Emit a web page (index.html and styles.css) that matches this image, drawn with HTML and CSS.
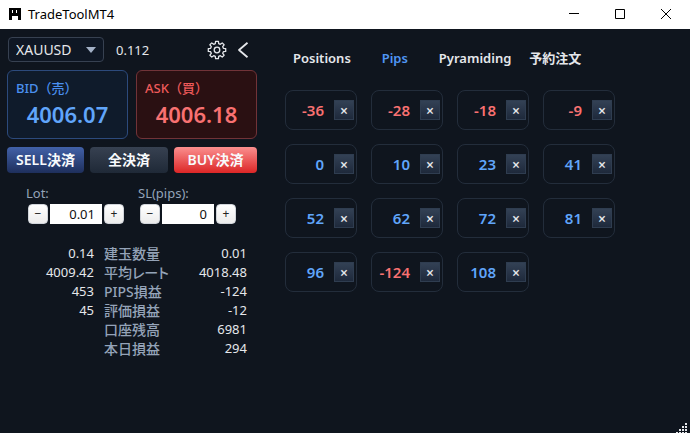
FILE: index.html
```html
<!DOCTYPE html>
<html lang="ja">
<head>
    <meta charset="UTF-8">
    <meta name="viewport" content="width=device-width, initial-scale=1.0">
    <title>TradeToolMT4</title>
    <link rel="stylesheet" href="styles.css">
</head>
<body>

<!-- Title Bar -->
<header class="titlebar">
    <svg class="app-icon" viewBox="0 0 12 12" shape-rendering="crispEdges" aria-hidden="true">
        <path d="M0 0h12v12h-3v-4h-6v4h-3z" fill="#000"/>
        <path d="M3 2h1v3h-1zM7 2h1v3h-1z" fill="#fff"/>
    </svg>
    <span class="app-name">TradeToolMT4</span>
    <button class="win-button" aria-label="最小化">
        <svg viewBox="0 0 10 10"><path d="M0 4.5h10"/></svg>
    </button>
    <button class="win-button" aria-label="最大化">
        <svg viewBox="0 0 10 10"><path d="M.5 .5h9v9h-9z"/></svg>
    </button>
    <button class="win-button" aria-label="閉じる">
        <svg viewBox="0 0 10 10"><path d="M0 0l10 10M10 0L0 10"/></svg>
    </button>
</header>

<main class="app">
    <!-- Order Panel -->
    <section class="panel">
        <div class="toolbar">
            <div class="symbol">
                <select class="symbol-select" aria-label="通貨ペア">
                    <option>XAUUSD</option>
                </select>
            </div>
            <span class="spread">0.112</span>
            <button class="icon-button settings" aria-label="設定">
                <svg width="20" height="20" viewBox="0 0 20 20">
                    <path d="M8.3 3.6L8.6 1.3h2.8l.3 2.3 1.6.7 1.9-1.4 1.9 1.9-1.4 1.9.7 1.6 2.3.3v2.8l-2.3.3-.7 1.6 1.4 1.9-1.9 1.9-1.9-1.4-1.6.7-.3 2.3H8.6l-.3-2.3-1.6-.7-1.9 1.4-1.9-1.9 1.4-1.9-.7-1.6-2.3-.3V8.6l2.3-.3.7-1.6-1.4-1.9 1.9-1.9 1.9 1.4z"/>
                    <circle cx="10" cy="10" r="2.8"/>
                </svg>
            </button>
            <button class="icon-button" aria-label="折りたたむ">
                <svg width="12" height="16" viewBox="0 0 12 16"><path class="chevron" d="M10.5 .8L2 8l8.5 7.2"/></svg>
            </button>
        </div>

        <div class="prices">
            <button class="price bid">
                <span class="price-label">BID（売）</span>
                <span class="price-value">4006.07</span>
            </button>
            <button class="price ask">
                <span class="price-label">ASK（買）</span>
                <span class="price-value">4006.18</span>
            </button>
        </div>

        <div class="closes">
            <button class="close-all sell">SELL決済</button>
            <button class="close-all both">全決済</button>
            <button class="close-all buy">BUY決済</button>
        </div>

        <div class="inputs">
            <div class="field">
                <label for="lot">Lot:</label>
                <div class="stepper">
                    <button class="step" data-step="-0.01" aria-label="Lotを減らす">−</button>
                    <input id="lot" type="text" value="0.01">
                    <button class="step" data-step="0.01" aria-label="Lotを増やす">+</button>
                </div>
            </div>
            <div class="field">
                <label for="sl">SL(pips):</label>
                <div class="stepper">
                    <button class="step" data-step="-1" aria-label="SLを減らす">−</button>
                    <input id="sl" type="text" value="0">
                    <button class="step" data-step="1" aria-label="SLを増やす">+</button>
                </div>
            </div>
        </div>

        <table class="summary">
            <tr><td>0.14</td><th>建玉数量</th><td>0.01</td></tr>
            <tr><td>4009.42</td><th>平均レート</th><td>4018.48</td></tr>
            <tr><td>453</td><th>PIPS損益</th><td>-124</td></tr>
            <tr><td>45</td><th>評価損益</th><td>-12</td></tr>
            <tr><td></td><th>口座残高</th><td>6981</td></tr>
            <tr><td></td><th>本日損益</th><td>294</td></tr>
        </table>
    </section>

    <!-- Position List -->
    <section class="board">
        <nav class="tabs">
            <button class="tab">Positions</button>
            <button class="tab active">Pips</button>
            <button class="tab">Pyramiding</button>
            <button class="tab">予約注文</button>
        </nav>
        <div class="pips">
            <div class="pip loss"><span>-36</span><button aria-label="決済">×</button></div>
            <div class="pip loss"><span>-28</span><button aria-label="決済">×</button></div>
            <div class="pip loss"><span>-18</span><button aria-label="決済">×</button></div>
            <div class="pip loss"><span>-9</span><button aria-label="決済">×</button></div>
            <div class="pip"><span>0</span><button aria-label="決済">×</button></div>
            <div class="pip"><span>10</span><button aria-label="決済">×</button></div>
            <div class="pip"><span>23</span><button aria-label="決済">×</button></div>
            <div class="pip"><span>41</span><button aria-label="決済">×</button></div>
            <div class="pip"><span>52</span><button aria-label="決済">×</button></div>
            <div class="pip"><span>62</span><button aria-label="決済">×</button></div>
            <div class="pip"><span>72</span><button aria-label="決済">×</button></div>
            <div class="pip"><span>81</span><button aria-label="決済">×</button></div>
            <div class="pip"><span>96</span><button aria-label="決済">×</button></div>
            <div class="pip loss"><span>-124</span><button aria-label="決済">×</button></div>
            <div class="pip"><span>108</span><button aria-label="決済">×</button></div>
        </div>
    </section>
</main>

<!-- Resize Grip -->
<svg class="grip" width="12" height="12" viewBox="0 0 12 12" shape-rendering="crispEdges" aria-hidden="true">
    <path d="M9 2h2v2h-2zM6 5h2v2h-2zM9 5h2v2h-2zM3 8h2v2h-2zM6 8h2v2h-2zM9 8h2v2h-2zM0 11h2v1h-2zM3 11h2v1h-2zM6 11h2v1h-2zM9 11h2v1h-2z"/>
</svg>

<script>
    document.querySelectorAll('.step').forEach((button) => {
        button.addEventListener('click', () => {
            const input = button.parentElement.querySelector('input');
            const digits = input.id === 'lot' ? 2 : 0;
            const next = Math.max(0, Number(input.value) + Number(button.dataset.step));
            input.value = next.toFixed(digits);
        });
    });
</script>

</body>
</html>
```
FILE: styles.css
```css
* {
    box-sizing: border-box;
}

body {
    display: flex;
    flex-direction: column;
    min-height: 100vh;
    margin: 0;
    font-family: "Noto Sans", "Noto Sans CJK JP", sans-serif;
    font-size: 13px;
    color: #e5e7eb;
    background: #0f151e;
}

button, input, select {
    font: inherit;
    color: inherit;
}

button {
    padding: 0;
    border: none;
    background: none;
    cursor: pointer;
}

/* Title Bar */
.titlebar {
    display: flex;
    align-items: center;
    height: 29px;
    padding: 0 1px 2px 9px;
    color: #000;
    background: #fff;
}

.app-icon {
    width: 12px;
    height: 12px;
    margin-right: 7px;
}

.app-name {
    flex: 1;
    font-size: 13px;
}

.win-button {
    width: 46px;
    height: 27px;
}

.win-button svg {
    display: block;
    width: 10px;
    height: 10px;
    margin: 0 auto;
    fill: none;
    stroke: #000;
}

/* Layout */
.app {
    display: flex;
    flex: 1;
    padding: 8px 7px;
    gap: 28px;
}

.panel {
    flex: 0 0 250px;
}

.board {
    flex: 1;
    min-width: 0;
}

/* Toolbar */
.toolbar {
    display: flex;
    align-items: center;
    margin-bottom: 8px;
    padding: 0 8px 0 1px;
}

.symbol {
    position: relative;
}

.symbol::after {
    content: "";
    position: absolute;
    top: 10px;
    right: 8px;
    border: 5px solid transparent;
    border-top: 6px solid #a3b1c6;
    border-bottom: none;
    pointer-events: none;
}

.symbol-select {
    display: block;
    width: 96px;
    height: 25px;
    padding: 0 7px;
    border: 1px solid #374151;
    border-radius: 4px;
    appearance: none;
    font-size: 14px;
    background: #0f1724;
}

.spread {
    flex: 1;
    padding-left: 12px;
    font-size: 13px;
}

.icon-button svg {
    display: block;
    fill: none;
    stroke: #e5e7eb;
    stroke-width: 1.3;
    stroke-linejoin: round;
}

.icon-button .chevron {
    stroke-width: 1.8;
}

.settings {
    margin-right: 10px;
}

/* Prices */
.prices {
    display: flex;
    gap: 8px;
    margin-bottom: 8px;
}

.price {
    flex: 1;
    height: 69px;
    padding: 7px 8px 9px;
    border: 1px solid;
    border-radius: 6px;
    font-weight: 600;
    text-align: left;
}

.price-label {
    display: block;
    font-size: 13px;
    font-weight: 500;
    line-height: 20px;
}

.price-value {
    display: block;
    font-size: 22px;
    line-height: 32px;
    text-align: center;
}

.bid {
    border-color: #2c4a7c;
    color: #60a5fa;
    background: #0f1b2b;
}

.bid .price-label {
    color: #4a90f0;
}

.ask {
    border-color: #713338;
    color: #f87171;
    background: #2a1012;
}

.ask .price-label {
    color: #ef5a5a;
}

/* Close Buttons */
.closes {
    display: grid;
    grid-template-columns: 77fr 78fr 83fr;
    gap: 6px;
    margin-bottom: 10px;
}

.close-all {
    height: 26px;
    border-radius: 4px;
    font-size: 14px;
    font-weight: 600;
    line-height: 26px;
    color: #f8fafc;
}

.sell {
    background: linear-gradient(#4261a8, #1e2f5c);
}

.both {
    background: linear-gradient(#374151, #1f2937);
}

.buy {
    background: linear-gradient(#fb8f8f, #dc2626);
}

/* Lot / SL */
.inputs {
    display: flex;
    gap: 14px;
    margin-bottom: 20px;
    padding-left: 19px;
}

.field label {
    display: block;
    line-height: 20px;
    color: #94a3b8;
}

.stepper {
    display: flex;
    gap: 2px;
    padding: 1px 0 0 2px;
}

.stepper input {
    width: 52px;
    height: 20px;
    padding: 0 7px;
    border: none;
    text-align: right;
    color: #111;
    background: #fff;
}

.step {
    width: 20px;
    height: 20px;
    border: 1px solid #d1d5db;
    border-radius: 4px;
    font-size: 12px;
    line-height: 18px;
    color: #222;
    background: linear-gradient(#fff, #ececec);
}

/* Summary */
.summary {
    width: 100%;
    border-collapse: collapse;
    table-layout: fixed;
}

.summary td,
.summary th {
    height: 19px;
    padding: 0;
    line-height: 19px;
    white-space: nowrap;
}

.summary td {
    text-align: right;
}

.summary td:first-child {
    width: 87px;
}

.summary td:last-child {
    padding-right: 10px;
}

.summary th {
    width: 76px;
    padding-left: 10px;
    font-size: 14px;
    font-weight: 500;
    font-feature-settings: "palt";
    text-align: left;
    color: #94a3b8;
}

/* Tabs */
.tabs {
    display: flex;
    margin-bottom: 21px;
    padding-top: 11px;
}

.tab {
    min-width: 72px;
    padding: 0 8px;
    font-size: 13px;
    font-weight: 600;
    line-height: 21px;
    white-space: nowrap;
}

.tab.active {
    color: #5097f5;
}

/* Pips */
.pips {
    display: grid;
    grid-template-columns: repeat(auto-fill, 72px);
    gap: 14px;
    max-width: 330px;
}

.pip {
    display: flex;
    align-items: center;
    justify-content: flex-end;
    gap: 10px;
    height: 40px;
    padding-right: 2px;
    border: 1px solid #232d3b;
    border-radius: 8px;
    font-size: 15px;
    font-weight: 600;
    color: #60a5fa;
}

.pip.loss {
    color: #f87171;
}

.pip button {
    width: 20px;
    height: 20px;
    border: 1px solid #2f3d50;
    font-size: 14px;
    line-height: 20px;
    color: #e5e7eb;
    background: linear-gradient(#334155, #1e293b);
}

/* Resize Grip */
.grip {
    position: fixed;
    right: 2px;
    bottom: 0;
    fill: #e5e7eb;
}
```
